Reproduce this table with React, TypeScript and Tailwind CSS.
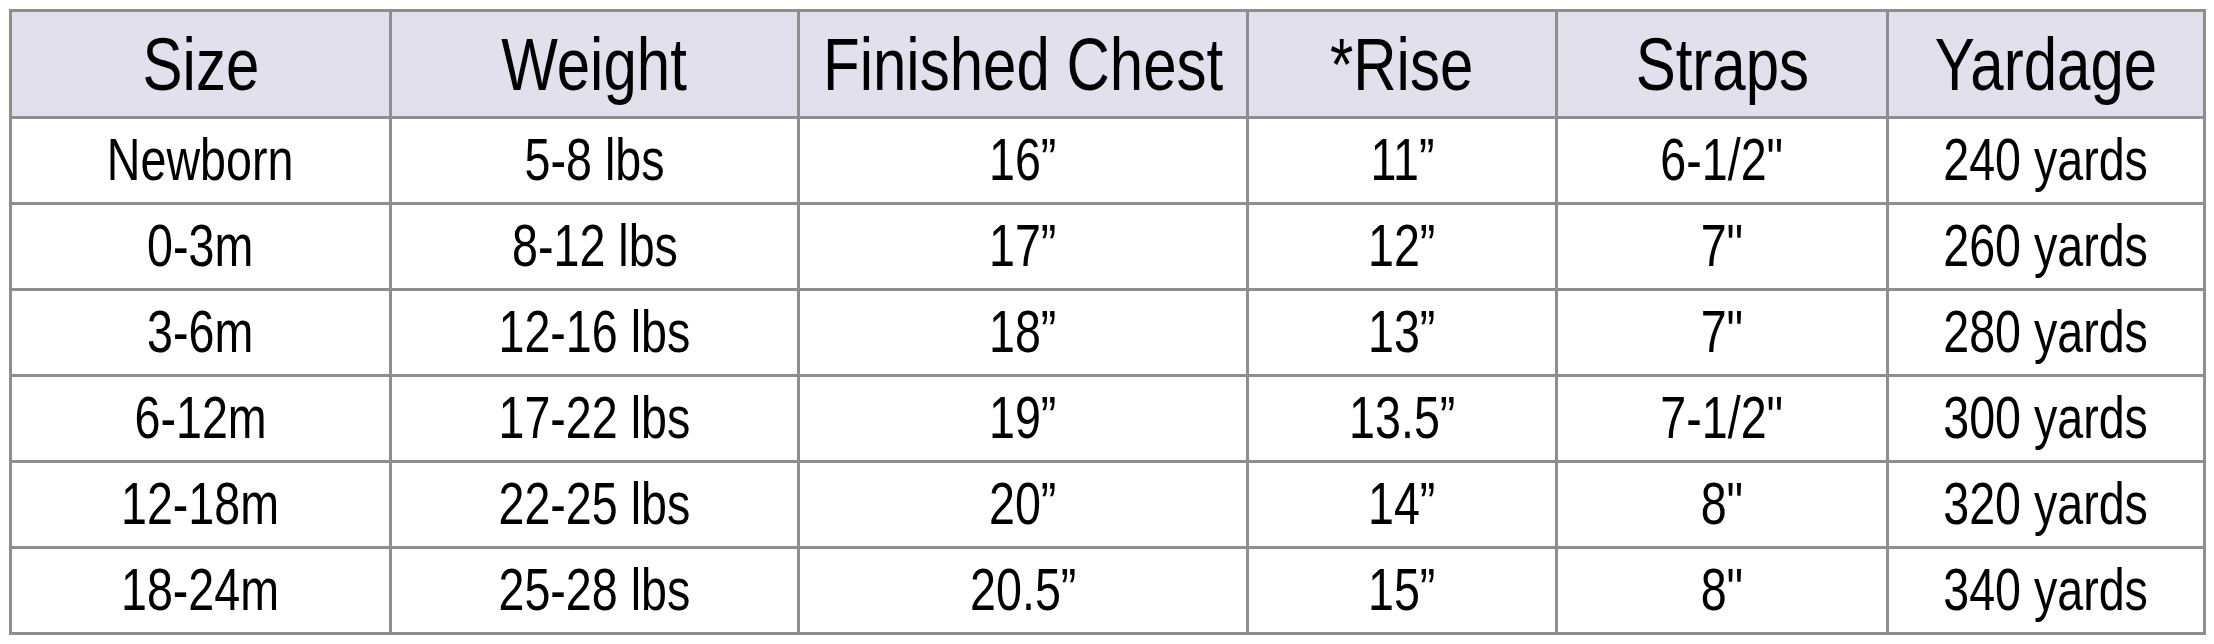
import React from "react";

const headers = ["Size", "Weight", "Finished Chest", "*Rise", "Straps", "Yardage"];
const rows: string[][] = [
  ["Newborn", "5-8 lbs", "16\u201D", "11\u201D", "6-1/2\"", "240 yards"],
  ["0-3m", "8-12 lbs", "17\u201D", "12\u201D", "7\"", "260 yards"],
  ["3-6m", "12-16 lbs", "18\u201D", "13\u201D", "7\"", "280 yards"],
  ["6-12m", "17-22 lbs", "19\u201D", "13.5\u201D", "7-1/2\"", "300 yards"],
  ["12-18m", "22-25 lbs", "20\u201D", "14\u201D", "8\"", "320 yards"],
  ["18-24m", "25-28 lbs", "20.5\u201D", "15\u201D", "8\"", "340 yards"],
];

export default function App() {
  return (
    <div className="w-[2214px] h-[644px] bg-white pt-[9px] pl-[9px]" style={{ fontFamily: '"Liberation Sans", Arial, sans-serif' }}>
      <div className="grid w-[2197px] grid-cols-[377px_405px_446px_306px_328px_314px] grid-rows-[104px_repeat(6,83px)] gap-[3px] border-[3px] border-[#8e8e8e] bg-[#8e8e8e] text-black">
        {headers.map((h) => (
          <div key={h} className="flex items-center justify-center bg-[#e2e0ec] text-[75px] leading-none">
            <span className="inline-block whitespace-nowrap scale-x-[0.8]">{h}</span>
          </div>
        ))}
        {rows.map((r, i) =>
          r.map((c, j) => (
            <div key={`${i}-${j}`} className="flex items-center justify-center bg-white text-[59px] leading-none">
              <span className="inline-block whitespace-nowrap scale-x-[0.79]">{c}</span>
            </div>
          ))
        )}
      </div>
    </div>
  );
}
